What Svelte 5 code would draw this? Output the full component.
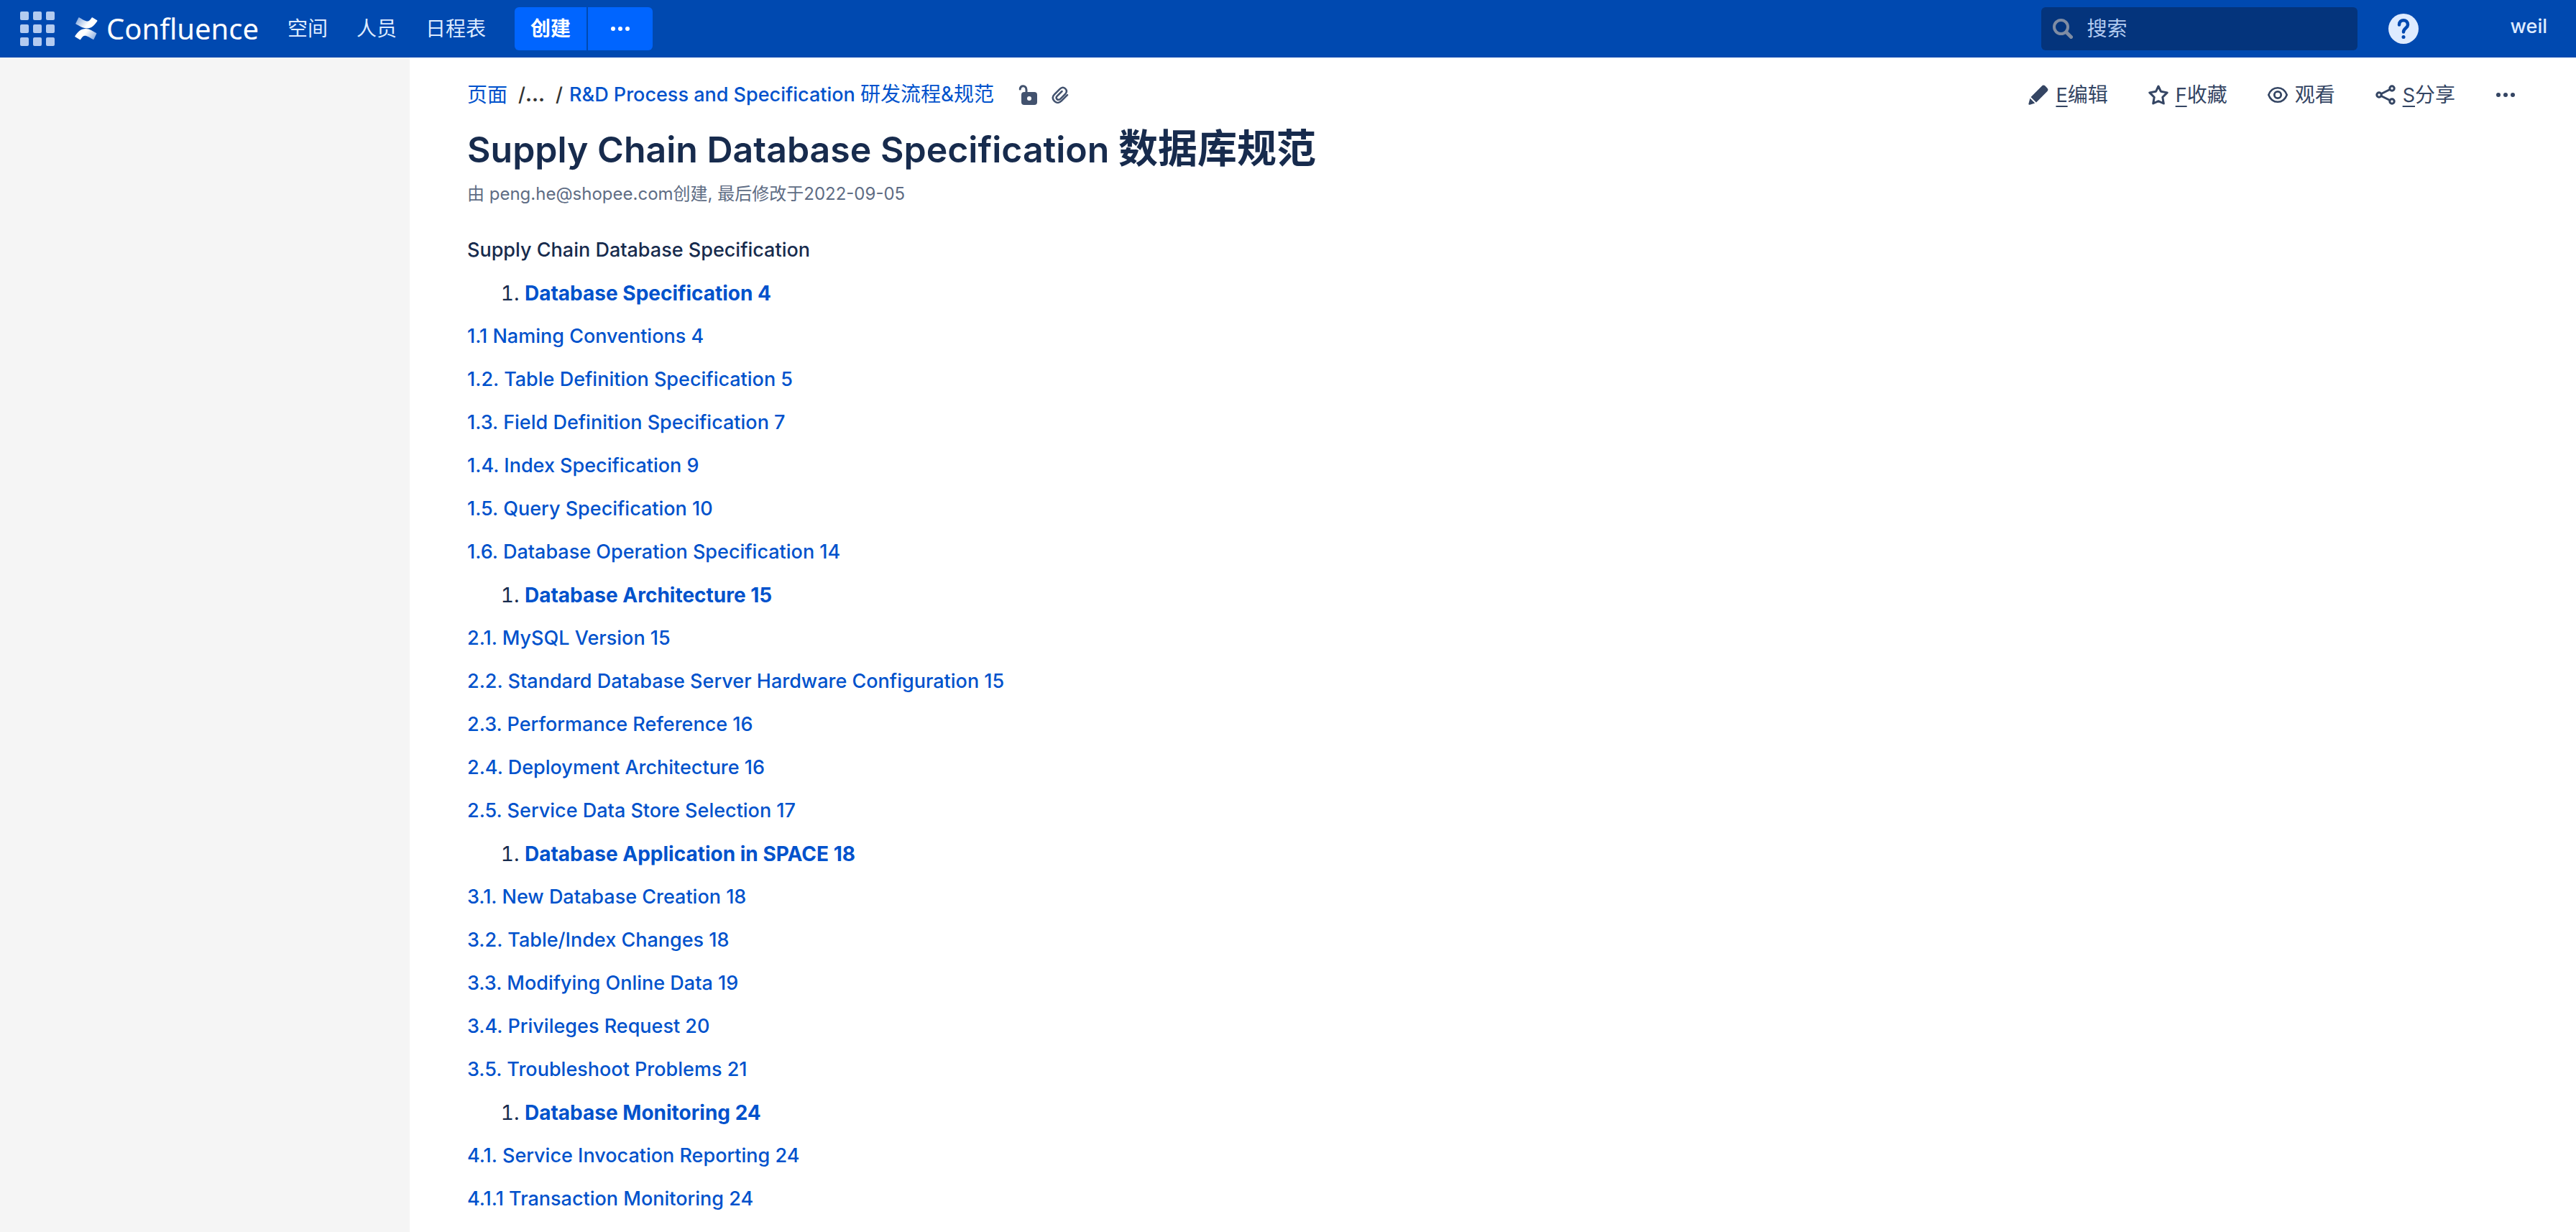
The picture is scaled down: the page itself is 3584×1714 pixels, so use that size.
<script>
  const nav = ['空间', '人员', '日程表'];
  const cells = [0, 18, 36];

  const contents = [
    { text: 'Database Specification 4', chapter: true },
    { text: '1.1 Naming Conventions 4' },
    { text: '1.2. Table Definition Specification 5' },
    { text: '1.3. Field Definition Specification 7' },
    { text: '1.4. Index Specification 9' },
    { text: '1.5. Query Specification 10' },
    { text: '1.6. Database Operation Specification 14' },
    { text: 'Database Architecture 15', chapter: true },
    { text: '2.1. MySQL Version 15' },
    { text: '2.2. Standard Database Server Hardware Configuration 15' },
    { text: '2.3. Performance Reference 16' },
    { text: '2.4. Deployment Architecture 16' },
    { text: '2.5. Service Data Store Selection 17' },
    { text: 'Database Application in SPACE 18', chapter: true },
    { text: '3.1. New Database Creation 18' },
    { text: '3.2. Table/Index Changes 18' },
    { text: '3.3. Modifying Online Data 19' },
    { text: '3.4. Privileges Request 20' },
    { text: '3.5. Troubleshoot Problems 21' },
    { text: 'Database Monitoring 24', chapter: true },
    { text: '4.1. Service Invocation Reporting 24' },
    { text: '4.1.1 Transaction Monitoring 24' }
  ];
</script>

<div class="app">
  <header class="topbar">
    <button class="icon-button" aria-label="应用">
      <svg width="48" height="48" viewBox="0 0 48 48" fill="#b3cbf0">
        {#each cells as y}
          {#each cells as x}
            <rect {x} {y} width="12" height="12" rx="2" />
          {/each}
        {/each}
      </svg>
    </button>
    <a class="brand" href="#home">
      <svg width="32" height="32" viewBox="0 0 32 32" aria-hidden="true">
        <defs>
          <linearGradient id="brand-top" x1="3" y1="4" x2="18" y2="16" gradientUnits="userSpaceOnUse">
            <stop offset="0" stop-color="#8fb1e2" />
            <stop offset="0.8" stop-color="#fff" />
          </linearGradient>
          <linearGradient id="brand-bottom" x1="29" y1="28" x2="14" y2="16" gradientUnits="userSpaceOnUse">
            <stop offset="0" stop-color="#8fb1e2" />
            <stop offset="0.8" stop-color="#fff" />
          </linearGradient>
        </defs>
        <path fill="url(#brand-top)" d="M5.3 .6 L1.3 8.6 Q1 9.2 1.6 9.5 C7 12 11 15.4 16.500 15.400 C23.500 15.400 27 11.500 31.400 5.200 Q31.700 4.600 31.100 4.200 L24.500 .2 Q24 0 23.600 .5 C21 4.500 19 6.400 15.800 5.300 C12 4 9 2 6.100 .3 Q5.600 0 5.300 .6Z" />
        <path fill="url(#brand-bottom)" d="M26.500 30.700 L30.300 22.800 Q30.600 22.200 30 21.900 C25 19.500 21 16 15.300 16 C8.500 16 4.500 20 .3 26.200 Q0 26.800 .6 27.200 L7.200 31.200 Q7.700 31.400 8.100 30.900 C10.700 27 12.500 25 16 26.100 C19.500 27.200 22.500 29.500 25.700 31 Q26.200 31.300 26.500 30.700Z" />
      </svg>
      <span>Confluence</span>
    </a>
    <nav class="nav">
      {#each nav as item}
        <a href="#nav">{item}</a>
      {/each}
    </nav>
    <div class="create">
      <button class="create-main">创建</button>
      <button class="create-more" aria-label="更多创建选项">
        <svg width="28" height="28" viewBox="0 0 28 28" fill="#fff">
          <circle cx="4" cy="14" r="3" /><circle cx="14" cy="14" r="3" /><circle cx="24" cy="14" r="3" />
        </svg>
      </button>
    </div>
    <label class="search">
      <svg width="28" height="28" viewBox="0 0 28 28" fill="none" stroke="#7f8ca3" aria-hidden="true">
        <circle cx="11.500" cy="11.500" r="9.500" stroke-width="4" />
        <path d="M19 19 L25.500 25.500" stroke-width="5" stroke-linecap="round" />
      </svg>
      <input type="text" placeholder="搜索" aria-label="搜索" />
    </label>
    <button class="icon-button" aria-label="帮助">
      <svg width="42" height="42" viewBox="0 0 42 42">
        <circle cx="21" cy="21" r="21" fill="#deebff" />
        <path d="M15 15.500 C15 7 27 7 27 15.500 C27 20 21 20 21 25.500" fill="none" stroke="#0049b0" stroke-width="4.500" stroke-linecap="round" />
        <circle cx="21" cy="32.500" r="2.500" fill="#0049b0" />
      </svg>
    </button>
    <a class="user" href="#profile">weil</a>
  </header>

  <div class="body">
    <aside class="sidebar"></aside>
    <main class="page">
      <div class="page-bar">
        <nav class="crumbs" aria-label="页面路径">
          <a class="han" href="#pages">页面</a>
          <span class="slash">/</span>
          <button class="ellipsis" aria-label="展开路径">...</button>
          <span class="slash">/</span>
          <a href="#parent">R&amp;D Process and Specification <span class="han">研发流程&amp;规范</span></a>
          <button class="icon-button lock" aria-label="限制">
            <svg width="28" height="28" viewBox="0 0 28 28">
              <path d="M2.200 6 C2.200 .2 11 .2 11 7 V12" fill="none" stroke="#42526e" stroke-width="3" stroke-linecap="round" />
              <rect x="4" y="10" width="22" height="18" rx="4" fill="#42526e" />
              <circle cx="15" cy="19" r="3" fill="#fff" />
            </svg>
          </button>
          <button class="icon-button clip" aria-label="附件">
            <svg width="24" height="24" viewBox="0 0 24 24" fill="none" stroke="#42526e" stroke-width="2.500" stroke-linecap="round" stroke-linejoin="round">
              <path d="M22 12.200 L13.800 20.400 C10.500 23.700 6.800 23.400 4.200 20.800 C1.300 17.900 1 14.300 4 11.300 L11.500 3.800 C14 1.300 17 1.300 19.200 3.400 C21.400 5.600 21.300 8.500 19 10.800 L12 17.800 C10.600 19.200 8.700 19.100 7.600 18 C6.300 16.700 6.400 15.100 7.800 13.700 L14.500 7" />
            </svg>
          </button>
        </nav>
        <div class="actions">
          <a href="#edit">
            <svg width="28" height="28" viewBox="0 0 28 28" fill="#344563" aria-hidden="true">
              <path d="M3.500 17 L18.500 1.900 Q21 -.6 23.500 1.600 L26.300 4.400 Q28.600 7 26.200 9.300 L11 24.500 Z" />
              <path d="M2.400 18.800 L9.200 25.600 L2 27.800 Q.1 28.100 .4 26.200 Z" />
            </svg>
            <span><u>E</u>编辑</span>
          </a>
          <a href="#favourite">
            <svg width="28" height="28" viewBox="0 0 28 28" fill="none" stroke="#344563" stroke-width="3" stroke-linejoin="round" aria-hidden="true">
              <path d="M14 2 L17.400 9.200 L26.200 10.900 L19.800 17.300 L21.300 26 L14 22.700 L6.700 26 L8.200 17.300 L1.800 10.900 L10.600 9.200 Z" />
            </svg>
            <span><u>F</u>收藏</span>
          </a>
          <a href="#watch">
            <svg width="28" height="28" viewBox="0 0 28 28" fill="none" stroke="#344563" aria-hidden="true">
              <path d="M1.300 14 C3.500 8 8 4.200 14 4.200 C20 4.200 24.500 8 26.700 14 C24.500 20 20 23.800 14 23.800 C8 23.800 3.500 20 1.300 14Z" stroke-width="2.600" />
              <circle cx="14" cy="14" r="4.700" stroke-width="2.800" />
            </svg>
            <span>观看</span>
          </a>
          <a href="#share">
            <svg width="28" height="28" viewBox="0 0 28 28" fill="none" stroke="#344563" stroke-width="3" aria-hidden="true">
              <circle cx="5" cy="14" r="3.200" /><circle cx="23" cy="5" r="3.200" /><circle cx="23" cy="23" r="3.200" />
              <path d="M8 12.500 L20 6.500 M8 15.500 L20 21.500" />
            </svg>
            <span><u>S</u>分享</span>
          </a>
          <button class="icon-button" aria-label="更多">
            <svg width="28" height="28" viewBox="0 0 28 28" fill="#344563">
              <circle cx="4" cy="14" r="3" /><circle cx="14" cy="14" r="3" /><circle cx="24" cy="14" r="3" />
            </svg>
          </button>
        </div>
      </div>

      <h1>Supply Chain Database Specification <span>数据库规范</span></h1>
      <p class="byline">由 <a href="#author">peng.he@shopee.com</a>创建, 最后修改于<a href="#history">2022-09-05</a></p>

      <article class="content">
        <p>Supply Chain Database Specification</p>
        {#each contents as row}
          {#if row.chapter}
            <ol><li><a href="#section">{row.text}</a></li></ol>
          {:else}
            <p><a href="#section">{row.text}</a></p>
          {/if}
        {/each}
      </article>
    </main>
  </div>
</div>

<style>
  :global(body) {
    margin: 0;
    background: #fff;
  }
  .app {
    display: flex;
    flex-direction: column;
    height: 100vh;
    overflow: hidden;
    font-family: Inter, 'Noto Sans CJK SC', sans-serif;
    font-size: 27px;
    font-weight: 450;
    line-height: 40px;
    color: #172b4d;
  }
  a {
    color: #0052cc;
    text-decoration: none;
  }
  button {
    font: inherit;
    border: 0;
    padding: 0;
    background: none;
    cursor: pointer;
  }
  svg {
    display: block;
    flex: none;
  }
  p,
  h1,
  ol {
    margin: 0;
  }
  .icon-button {
    display: flex;
    flex: none;
  }
  .han {
    font-size: 28px;
    font-weight: 400;
    line-height: 1;
  }

  .topbar {
    display: flex;
    align-items: center;
    flex: none;
    height: 80px;
    padding: 0 40px 0 28px;
    background: #0049b0;
  }
  .brand {
    display: flex;
    align-items: center;
    gap: 12px;
    margin-left: 28px;
    font: 40px/60px 'Noto Sans', sans-serif;
    color: #fff;
  }
  .nav {
    display: flex;
    gap: 40px;
    margin-left: 40px;
    font-size: 28px;
    font-weight: 400;
  }
  .nav a {
    color: #deebff;
  }
  .create {
    display: flex;
    gap: 2px;
    margin-left: 40px;
  }
  .create button {
    display: flex;
    align-items: center;
    justify-content: center;
    height: 60px;
    background: #0065ff;
    color: #fff;
    font-size: 28px;
    font-weight: 700;
  }
  .create .create-main {
    width: 100px;
    border-radius: 6px 0 0 6px;
  }
  .create .create-more {
    width: 90px;
    border-radius: 0 6px 6px 0;
  }
  .search {
    display: flex;
    align-items: center;
    gap: 20px;
    box-sizing: border-box;
    width: 440px;
    height: 60px;
    margin-left: auto;
    margin-right: 43px;
    padding: 0 16px;
    border-radius: 6px;
    background: #04347c;
  }
  .search input {
    flex: 1;
    min-width: 0;
    padding: 0;
    border: 0;
    outline: 0;
    background: none;
    font: inherit;
    font-size: 28px;
    font-weight: 400;
    color: #deebff;
  }
  .search input::placeholder {
    color: #b3cbf0;
    opacity: 1;
  }
  .user {
    margin-left: 128px;
    padding-bottom: 6px;
    white-space: nowrap;
    color: #deebff;
  }

  .body {
    display: flex;
    flex: 1;
    min-height: 0;
  }
  .sidebar {
    flex: none;
    width: 570px;
    background: #f5f5f5;
  }
  .page {
    flex: 1;
    min-width: 0;
    padding: 32px 80px 0;
  }
  .page-bar,
  .crumbs,
  .actions,
  .actions a {
    display: flex;
    align-items: center;
  }
  .page-bar {
    justify-content: space-between;
    height: 40px;
  }
  .crumbs {
    white-space: nowrap;
  }
  .slash {
    margin: 0 9px 0 15px;
    color: #333;
  }
  .ellipsis {
    margin-left: -9px;
    font-weight: 700;
    color: #333;
  }
  .lock {
    margin-left: 34px;
  }
  .clip {
    margin-left: 18px;
  }
  .actions {
    gap: 56px;
    padding-right: 4px;
    font-size: 28px;
    font-weight: 400;
  }
  .actions a {
    gap: 10px;
    color: #344563;
  }
  .actions u {
    font-size: 27px;
    line-height: 1;
    text-decoration-thickness: 2px;
    text-underline-offset: 5px;
  }
  h1 {
    margin-top: 24px;
    font-size: 50px;
    font-weight: 600;
    line-height: 64px;
  }
  h1 span {
    font-size: 55px;
    line-height: 1;
  }
  .byline,
  .byline a {
    color: #5e6c84;
  }
  .byline {
    margin-top: 12px;
    font-size: 24px;
    font-weight: 400;
    line-height: 36px;
  }
  .content {
    display: flex;
    flex-direction: column;
    gap: 20px;
    margin-top: 40px;
  }
  .content ol {
    padding-left: 80px;
    font-size: 28px;
    font-weight: 400;
  }
  .content li a {
    font-weight: 700;
  }
</style>
